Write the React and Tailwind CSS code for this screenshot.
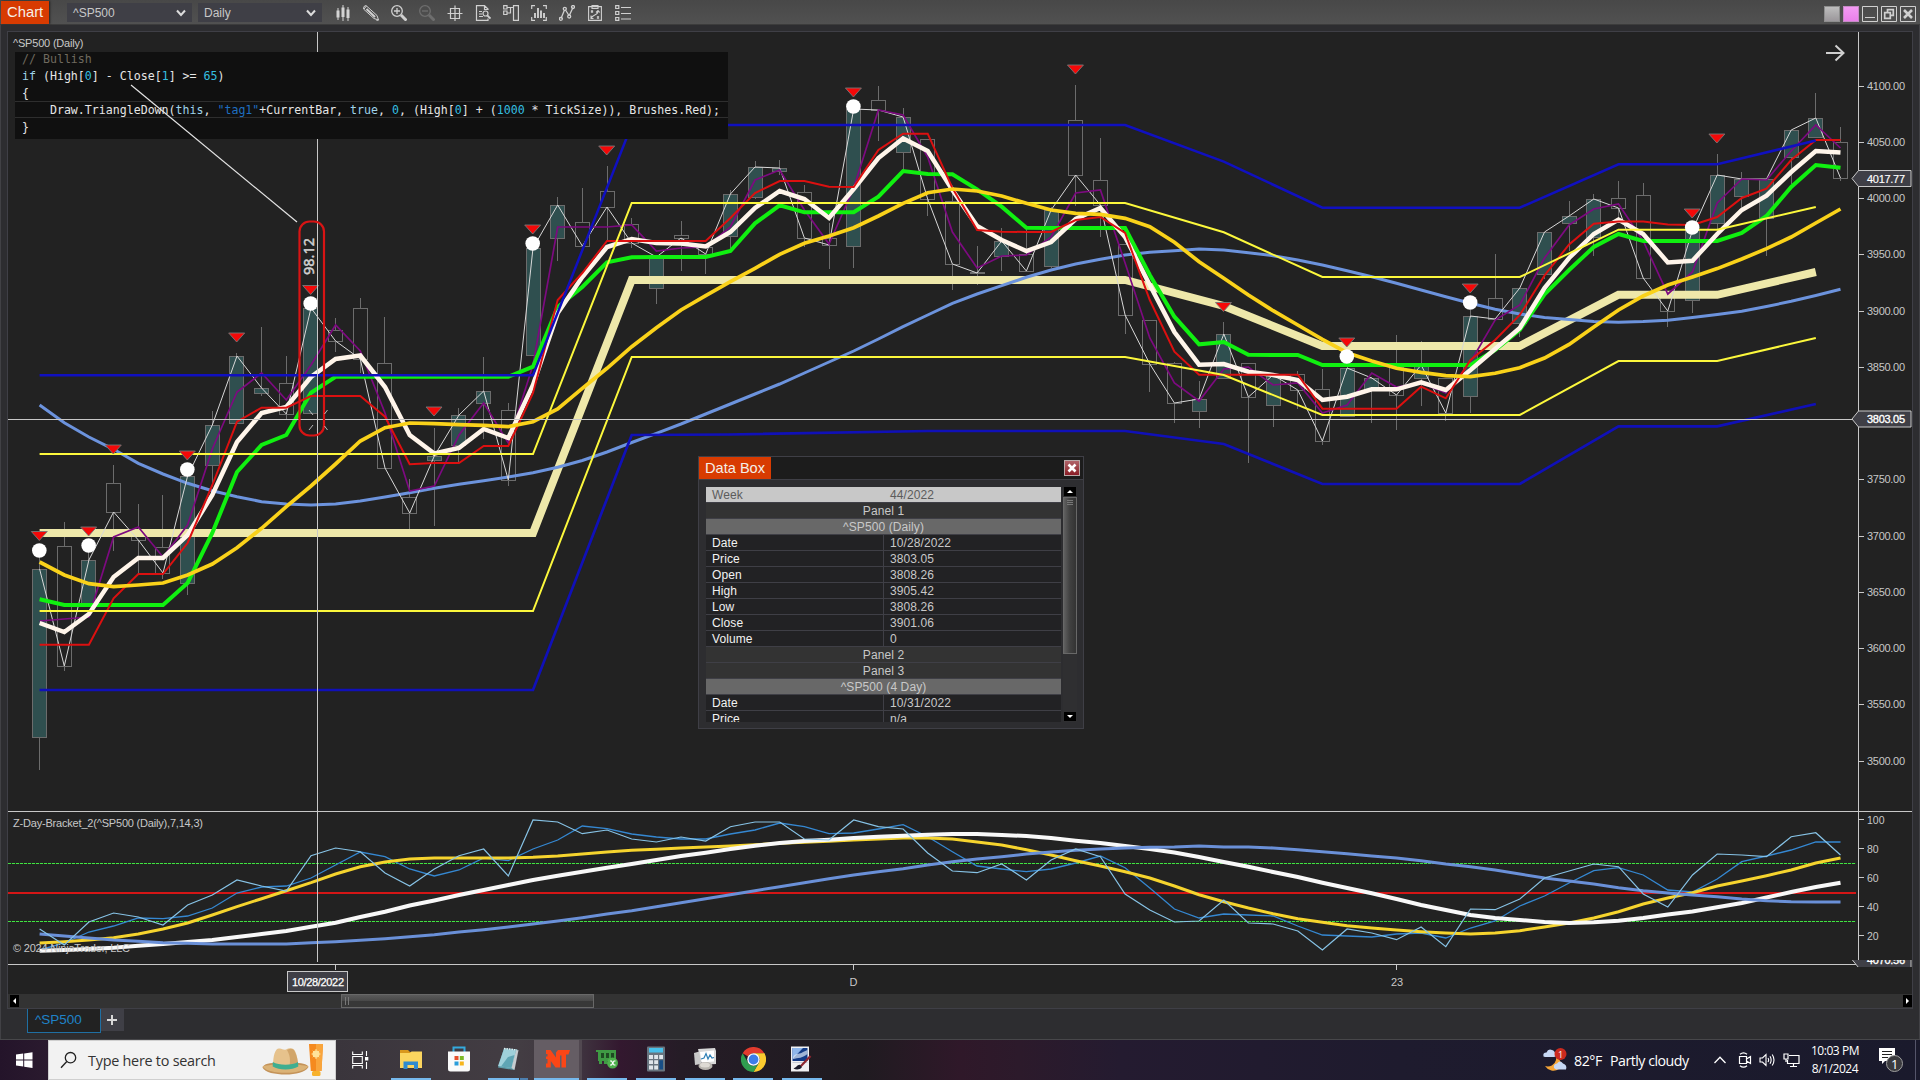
import React from "react";

const ARIAL = "font-['Liberation_Sans',Arial,sans-serif]";
const SEGOE = "font-['Open_Sans','Noto_Sans',sans-serif]";

const nums = (s) => s.trim().split(/\s+/).map(Number);
const barX = (i) => 39.6 + 24.67 * i;
const toPoints = (ys) => ys.map((y, i) => `${barX(i).toFixed(1)},${y}`).join(" ");
const sparse = (pairs) => pairs.map(([i, y]) => `${barX(i).toFixed(1)},${y}`).join(" ");

// high, low, body top, body bottom, rising (1) or falling (0)
const CANDLES = [
  [556, 770, 569, 737, 1], [522, 671, 546, 666, 0], [545, 605, 560, 605, 1], [465, 551, 483, 512, 0],
  [504, 574, 530, 540, 0], [495, 579, 547, 573, 0], [475, 595, 476, 583, 1], [411, 487, 425, 465, 1],
  [353, 424, 356, 423, 1], [327, 396, 388, 393, 1], [356, 419, 383, 414, 0], [303, 414, 308, 413, 1],
  [318, 352, 330, 341, 0], [298, 373, 308, 359, 0], [317, 469, 363, 468, 0], [479, 537, 497, 513, 0],
  [428, 526, 456, 460, 1], [408, 463, 415, 445, 1], [357, 439, 391, 403, 1], [403, 486, 410, 480, 0],
  [245, 356, 248, 355, 1], [197, 261, 205, 238, 1], [188, 247, 222, 246, 0], [166, 240, 191, 207, 0],
  [218, 248, 224, 243, 0], [256, 304, 257, 288, 1], [221, 271, 235, 238, 0], [245, 274, 247, 254, 0],
  [190, 253, 194, 236, 1], [161, 199, 167, 197, 1], [160, 175, 168, 171, 1], [185, 247, 192, 238, 0],
  [223, 269, 238, 245, 0], [105, 268, 109, 246, 1], [86, 141, 100, 110, 0], [108, 170, 117, 152, 1],
  [139, 216, 139, 199, 0], [190, 290, 201, 264, 0], [246, 285, 272, 273, 0], [228, 271, 241, 256, 1],
  [229, 272, 254, 271, 0], [207, 268, 210, 266, 1], [85, 206, 120, 175, 0], [138, 237, 180, 205, 0],
  [244, 334, 244, 315, 0], [320, 392, 320, 364, 0], [362, 423, 363, 403, 0], [381, 428, 399, 411, 1],
  [322, 378, 334, 378, 1], [363, 463, 363, 397, 0], [374, 427, 375, 405, 1], [371, 409, 374, 390, 0],
  [369, 445, 389, 441, 0], [366, 416, 368, 416, 1], [377, 423, 378, 390, 1], [335, 430, 367, 395, 0],
  [341, 406, 365, 378, 1], [378, 421, 378, 413, 0], [310, 413, 316, 396, 1], [254, 319, 298, 319, 0],
  [288, 337, 288, 323, 1], [232, 279, 232, 274, 1], [201, 251, 216, 223, 1], [194, 256, 199, 237, 1],
  [181, 220, 198, 208, 0], [183, 278, 195, 278, 0], [292, 327, 293, 311, 0], [229, 313, 230, 300, 1],
  [154, 231, 175, 223, 1], [172, 208, 179, 196, 1], [179, 256, 179, 218, 1], [130, 184, 130, 157, 1],
  [93, 138, 118, 137, 1], [127, 181, 142, 178, 0],
];

const CLOSES = CANDLES.map(([, , top, bottom, up]) => (up ? top : bottom));

const PURPLE = nums(`621 619 617 537 527 557 525 449 392 373 400 365 325 351 413 491 486 435 403 443 365 227 227 227 225 251 248 247 227 180
 170 210 244 188 110 115 157 232 268 256 255 237 193 190 263 338 383 401 369 367 385 383 413 405 373 387 383 393 362 320 305 258 225 209 204
 241 294 272 203 179 180 151 125 148`);
const CREAM = nums(`623 632 614 577 558 558 535 495 442 413 407 377 359 355.5 387 435 453.5 448 429 438 385 313 277 247 239 243 243.5 246.5 232 208
 191 199 218 189 158 138.5 151 190 226 240 251 242 219 208 237 285 332 364.7 364 371.7 375 380 400 396.7 389.3 389.3 382.3 390 370 349 328 288
 258 234 219.5 234 262.4 260.7 234 210 195.6 172 151 152.5`);
const GREEN = nums(`599.3 605 605 605 605 605 583 533 472 445 435 392.7 376.7 376.7 376.7 376.7 376.7 376.7 376.7 376.7 366.7 307 287 262.3 257.3
 257 257 257 251 223.3 205.3 212.3 212.3 212.3 196.7 171 174 174.3 189.3 206.7 227.7 228 228 228 228 275 316.7 344.3 342 354.7 355 355 365 365
 365 365 365 365 365 350 330 294.4 270 247 234 241 241 241 241 233 216 187 165 167.7`);
const RED = nums(`644.7 644.7 644.7 598.3 574 574 543 485 421.7 407.7 407.7 396 396 396 416.7 464.3 463 463 446 446 393 300 273 241 241 241 241
 241 218 193 181 181 186.7 187 150 133.7 133.7 188 230 231.7 232 232 220 217 233 300 351.7 374.7 374.7 374.7 374.7 374.7 408.7 408.7 408.7 408.7
 386.7 398.3 360 340 315 275.5 244.5 223.8 221.4 221.4 224.5 225 217 198 188.7 160 140 140`);
const GOLD = nums(`562 575 583.7 586.7 585 583 575 564 547.7 528.3 506.7 486 464 441 427.7 423 423.7 424.7 425.3 426.7 421.7 409 388.3 368.3
 346.7 327.7 310 295.7 281.7 268.3 254.3 243.3 236 227.7 216 203.3 192.7 189 191 196 203.3 210 213.3 214.3 218.3 226.7 242.3 261.7 278.3 295 310.7
 325 339.3 352.7 361 368.3 372.3 375.7 376.7 373.3 367.7 358 344.4 327 310 296 285 277 268.6 259 248.6 237 223 209`);
const CORNFLOWER = nums(`405 422.7 437 449.3 463.3 474 483.3 490.7 496.7 501.7 504 505 504 501 497 492.7 488.3 484.3 480.7 477 472.7 467.3 460.5
 452 442.5 433.3 424 414 404 394 384 373 362 351 339 326.7 315 303.3 294 285.7 277.3 270 264 259.3 255 252.3 250.7 249 250 252.7 255.7 260 265
 270.7 276.7 283.3 290 296.7 303.3 309.3 314 317.5 319.6 321.6 322.3 321.6 320.2 317.5 314.4 311.3 306.5 301.3 295.5 289.3`);

const KHAKI = sparse([[0, 533], [20, 533], [24, 280], [44, 280], [48, 306], [52, 346], [60, 346], [64, 294.8], [68, 294.8], [72, 272]]);
const BLUE_TOP = sparse([[0, 375.3], [20, 375.3], [24, 125], [44, 125], [48, 161.7], [52, 207.7], [60, 207.7], [64, 164.3], [68, 164.3], [72, 140.5]]);
const BLUE_LOW = sparse([[0, 690], [20, 690], [24, 435], [28, 434.5], [36, 431], [44, 431], [48, 444], [52, 484], [60, 484], [64, 426.3], [68, 426.3], [72, 404]]);
const YELLOW_TOP = sparse([[0, 454], [20, 454], [24, 203], [44, 203], [48, 232.3], [52, 277], [60, 277], [64, 229.7], [68, 229.7], [72, 207]]);
const YELLOW_LOW = sparse([[0, 611], [20, 611], [24, 357], [44, 357], [48, 375], [52, 415], [60, 415], [64, 361], [68, 361], [72, 338]]);

const OSC_RAW = nums(`929 945 922 913 917 925 905 895 880 886 891 855.7 848 851.7 873 886 869 855.7 849 876 820 822 833.7 830 839 842 837 841
 826.7 822 822 839 840 820 826.7 829 853 871 872.7 864 880 860 849 856.7 894 910 922 921 900 923 924 931 950 929 933 939.7 927 946.7 909 909.7 899
 878 871 864 866.7 894 907 875 854 855 856.7 836.7 832.7 855`);
const OSC_AVG = nums(`950 943 932 926 918 918.7 916 908 893 887 886 878 865 852 856.7 869 876 870 858 860.7 849 840 826 828.7 834 837 839 839 834
 830 823 826.7 833.7 833 829 824.7 836.7 851.7 866 869 871.7 869 863 856 867.7 888 909 918 914 915 916 926 935 936 937 934 933 938 928 921 906 896
 883 870.7 867.7 875 890 892 879 861.7 856 850 842 842`);
const OSC_YELLOW = nums(`943 941.7 940 937.7 934 929 923 915 906.7 898.7 890.7 882.7 874 866.7 862 859 858 858 858 858 857.3 856 854 852 850.3
 849.3 848 847 846 844.7 843.3 842.3 841.3 840 839 838 838 839 842 845 849.7 855 860.7 866 871.7 878 886 894.7 901.7 908 913.7 918.7 922.3 925.7
 928 930 931.7 933 934 933 930.7 927 923 918 911.7 904 898 892.7 886 881 875.7 870 863 858`);
const OSC_WHITE = nums(`950.7 950 949 947.7 945.7 944 942 940 937 934 931 926.7 922.7 917 911.7 905.5 900.5 895 890 885 880 875.7 871.7 867.7 864
 860 856 852.7 849 845.7 843 841 839.7 838 836.7 835.7 834.7 834 834 835 836 838 840.7 843 846 849 852.5 857 862 866.7 872 877 882.7 888 893.3 899
 905 910 915 918 920 922 923 922.3 920.7 918 914.5 911.5 907.3 903 897.5 892 887 882.7`);
const OSC_BLUE = nums(`934 936 938 940 941.3 942.7 943.3 944 944 944 944 942.7 941.7 940.3 938.7 936.7 934.7 932 929.7 927 924 921 917.7 914 910.7
 906.7 902.7 898.7 894.7 890.7 886.7 882.7 878.7 875 871.7 868.7 865 861.7 859 856.7 854 852 850.3 849 848 847.3 847 846 847 847 848 849.7 851.7
 853.7 856 858 860.7 864 866.7 870 874 878 881 884 887.7 890.7 893 895 896.7 899 900.7 901.7 902 902`);

const TRIANGLES = [[0, 536], [2, 531.5], [3, 449.5], [6, 455.5], [8, 337.5], [11, 290], [16, 411.5], [20, 229.5], [23, 150.5], [33, 92.5], [42, 69.5], [48, 307], [53, 342.5], [58, 288.5], [67, 213.5], [68, 138.5]];
const BALLS = [[0, 550.5], [2, 545.5], [6, 469.5], [11, 303.5], [20, 243.5], [33, 106.5], [53, 356.5], [58, 302.5], [67, 227.5]];

const PRICE_TICKS = [4100, 4050, 4000, 3950, 3900, 3850, 3750, 3700, 3650, 3600, 3550, 3500];
const OSC_TICKS = [[100, 819.5], [80, 848.5], [60, 877.5], [40, 906.5], [20, 935.5]];

function Line({ pts, color, width }) {
  return <polyline points={pts} fill="none" stroke={color} strokeWidth={width} strokeLinejoin="miter" />;
}

function PriceTag({ y, label, bold }) {
  return (
    <g>
      <path d={`M1852 ${y}L1858.500 ${y - 8}H1911V${y + 8}H1858.500Z`} fill="#3f3f46" stroke="#c8c8c8" />
      <text x="1867" y={y + 4} fontSize="11" fill="#fff" stroke="#fff" strokeWidth={bold ? "0.350" : "0.150"} textLength="38">{label}</text>
    </g>
  );
}

function Chart() {
  return (
    <svg viewBox="0 25 1920 969" className={`block h-[969px] w-[1920px] ${ARIAL}`}>
      <rect x="0" y="25" width="1920" height="969" fill="#2d2d30" />
      <rect x="7.500" y="31.500" width="1905" height="970" fill="#222222" stroke="#3f3f46" />
      <path d="M0.500 25V994M1919.500 25V994" stroke="#414145" />

      {CANDLES.map(([hi, lo, top, bottom, up], i) => {
        const x = Math.floor(barX(i)) + 0.5;
        return (
          <g key={i} stroke="#6c6c6c" strokeWidth="1">
            <path d={`M${x} ${hi}V${top}M${x} ${bottom}V${lo}`} />
            <rect x={x - 7} y={top + 0.5} width="14" height={Math.max(bottom - top, 1)} fill={up ? "#2f4f4f" : "none"} />
          </g>
        );
      })}

      <Line pts={KHAKI} color="#eee8aa" width="8" />
      <Line pts={toPoints(CORNFLOWER)} color="#6c93dd" width="3" />
      <Line pts={toPoints(CLOSES)} color="#d8d8d8" width="1" />
      <Line pts={toPoints(PURPLE)} color="#7d0a80" width="1.700" />
      <Line pts={toPoints(GREEN)} color="#10f010" width="4" />
      <Line pts={toPoints(CREAM)} color="#fff5ea" width="4.500" />
      <Line pts={toPoints(RED)} color="#dc1010" width="2" />
      <Line pts={BLUE_TOP} color="#1010c0" width="2.500" />
      <Line pts={BLUE_LOW} color="#1010b8" width="2.700" />
      <Line pts={YELLOW_TOP} color="#fcf83c" width="2" />
      <Line pts={YELLOW_LOW} color="#fcf83c" width="2" />
      <Line pts={toPoints(GOLD)} color="#fad21a" width="3.700" />

      <path d="M8 863.500H1856M8 921.500H1856" stroke="#0f4a0f" strokeWidth="1" />
      <path d="M8 863.500H1856M8 921.500H1856" stroke="#44e044" strokeWidth="1" strokeDasharray="3 1" />
      <path d="M8 893H1856" stroke="#d41616" strokeWidth="2" />
      <Line pts={toPoints(OSC_AVG)} color="#3588d2" width="1.300" />
      <Line pts={toPoints(OSC_YELLOW)} color="#f6d42e" width="3" />
      <Line pts={toPoints(OSC_WHITE)} color="#f8f8f8" width="4" />
      <Line pts={toPoints(OSC_BLUE)} color="#6a90d8" width="3" />
      <Line pts={toPoints(OSC_RAW)} color="#87c3e6" width="1.200" />

      {TRIANGLES.map(([i, y]) => {
        const x = barX(i) - 0.3;
        return <path key={`t${i}`} d={`M${x - 8} ${y - 4.5}H${x + 8}L${x} ${y + 4.5}Z`} fill="#f40808" stroke="#777" strokeWidth="0.900" />;
      })}
      {BALLS.map(([i, y]) => (
        <circle key={`b${i}`} cx={barX(i) - 0.3} cy={y} r="7.300" fill="#fff" />
      ))}

      <path d="M317.500 32V962M8 419.500H1853" stroke="#c8c8c8" />
      <path d="M8 811.500H1912M8 964.500H1856" stroke="#c8c8c8" />
      <path d="M1858.500 32V960" stroke="#c8c8c8" />
      <path d="M335.500 965V970M853.500 965V970M1396.500 965V970" stroke="#c8c8c8" />

      <g fill="#c8c8c8" fontSize="11">
        {PRICE_TICKS.map((p) => {
          const y = Math.round(85.7 + (4100 - p) * 1.1248);
          return (
            <g key={p}>
              <path d={`M1859 ${y + 0.5}H1864`} stroke="#c8c8c8" />
              <text x="1867" y={y + 4} textLength="38">{p.toFixed(2)}</text>
            </g>
          );
        })}
        {OSC_TICKS.map(([v, y]) => (
          <g key={v}>
            <path d={`M1859 ${y}H1864`} stroke="#c8c8c8" />
            <text x="1867" y={y + 4.5} fontSize="10.500">{v}</text>
          </g>
        ))}
        <text x="849.500" y="986">D</text>
        <text x="1391" y="986">23</text>
        <text x="13" y="47" textLength="70.500">^SP500 (Daily)</text>
        <text x="13" y="827" textLength="190">Z-Day-Bracket_2(^SP500 (Daily),7,14,3)</text>
        <text x="13" y="952" textLength="117">© 2024 NinjaTrader, LLC</text>
      </g>

      <PriceTag y={178.5} label="4017.77" />
      <PriceTag y={419} label="3803.05" bold />
      <clipPath id="axis-edge"><rect x="1850" y="960" width="65" height="7" /></clipPath>
      <g clipPath="url(#axis-edge)"><PriceTag y={959.5} label="4070.56" bold /></g>

      <rect x="287.500" y="971.500" width="60" height="20" fill="#3f3f46" stroke="#c8c8c8" />
      <text x="292" y="985.500" fontSize="11" fill="#fff" stroke="#fff" strokeWidth="0.250" textLength="52">10/28/2022</text>

      <path d="M1826 53H1843M1835.500 45.500L1843.500 53L1835.500 60.500" fill="none" stroke="#d0d0d0" strokeWidth="2" />
    </svg>
  );
}

function CodeBox() {
  return (
    <div className="absolute left-[15px] top-[52px] h-[87px] w-[713px] whitespace-pre bg-[#101010] font-['DejaVu_Sans_Mono',monospace] text-[11.600px] leading-[17px] text-[#e6e6e6]">
      <div className="pl-[7px] text-[#6f6a5f] leading-[15px]">// Bullish</div>
      <div className="pl-[7px] pt-px"><span className="text-[#9fd3ea]">if</span> (High[<span className="text-[#35bfe0]">0</span>] - Close[<span className="text-[#35bfe0]">1</span>] &gt;= <span className="text-[#35bfe0]">65</span>)</div>
      <div className="h-[16px] pl-[7px]">{"{"}</div>
      <div className="h-[17px] border-y border-[#2e2e2e] pl-[7px] leading-[17px]">
        {"    Draw.TriangleDown("}<span className="text-[#9fd3ea]">this</span>, <span className="text-[#1f6fc0]">"tag1"</span>+CurrentBar, <span className="text-[#9fd3ea]">true</span>, <span className="text-[#35bfe0]">0</span>, (High[<span className="text-[#35bfe0]">0</span>] + (<span className="text-[#35bfe0]">1000</span> * TickSize)), Brushes.Red);
      </div>
      <div className="pl-[7px] pt-px">{"}"}</div>
    </div>
  );
}

// Hand-drawn callout that ties the code condition to one bar
function Annotation() {
  return (
    <svg viewBox="0 0 360 450" className="pointer-events-none absolute left-0 top-0 h-[450px] w-[360px] font-['Noto_Sans',sans-serif]">
      <path d="M131 85L297 222" stroke="#e4e4e4" strokeWidth="1.200" />
      <rect x="299.500" y="221.500" width="24.500" height="214" rx="10" fill="none" stroke="#d81414" strokeWidth="2.200" />
      <text transform="translate(314 275) rotate(-90)" fontSize="14.500" fill="#cfcfcf" stroke="#cfcfcf" strokeWidth="0.500" textLength="37">98.12</text>
      <path d="M309 410L313 415M327.500 410L324.500 414M313 425L309 430M324.500 426L327.500 430" stroke="#ddd" strokeWidth="0.800" />
    </svg>
  );
}

const ROWS = [
  ["panel", "Panel 1"], ["series", "^SP500 (Daily)"], ["row", "Date", "10/28/2022"], ["row", "Price", "3803.05"],
  ["row", "Open", "3808.26"], ["row", "High", "3905.42"], ["row", "Low", "3808.26"], ["row", "Close", "3901.06"],
  ["row", "Volume", "0"], ["panel", "Panel 2"], ["panel", "Panel 3"], ["series", "^SP500 (4 Day)"],
  ["row", "Date", "10/31/2022"], ["row", "Price", "n/a"],
];

function DataBox() {
  return (
    <div className={`absolute left-[698px] top-[456px] flex h-[273px] w-[386px] flex-col border border-[#3f3f46] bg-[#2d2d30] ${ARIAL}`}>
      <div className="flex h-[23px] items-center justify-between border-b border-[#3f3f46] bg-[#1c1c1c] pr-[3px]">
        <div className="h-full w-[72px] bg-[#d83b01] pl-[6px] text-[14.600px] leading-[22px] text-[#f4efe8]">Data Box</div>
        <div className="flex size-4 items-center justify-center border border-[#b9a9a9] bg-gradient-to-b from-[#b0646a] to-[#8a1a26]">
          <svg viewBox="0 0 10 10" className="size-[10px]"><path d="M1.500 1.500L8.500 8.500M8.500 1.500L1.500 8.500" stroke="#fff" strokeWidth="2.600" /></svg>
        </div>
      </div>
      <div className="ml-[7px] mt-[7px] flex h-[235px]">
        <div className="h-full w-[355px] overflow-hidden text-[12px] leading-[17px] tracking-[0.100px]">
          <div className="flex h-[16px] border-b border-[#3f3f46] bg-[#c8c8c8] text-[#5c5c5c]">
            <div className="w-[178px] pl-[6px]">Week</div>
            <div className="pl-[6px]">44/2022</div>
          </div>
          {ROWS.map(([kind, a, b], i) =>
            kind === "row" ? (
              <div key={i} className="flex h-[16px] border-b border-[#3f3f46] bg-[#222224]">
                <div className="w-[178px] border-r border-[#3f3f46] pl-[6px] text-[#f2f2f2]">{a}</div>
                <div className="pl-[6px] text-[#c8c8c8]">{b}</div>
              </div>
            ) : (
              <div key={i} className={kind === "panel" ? "h-[16px] border-b border-[#3f3f46] bg-[#333333] text-center text-[#c8c8c8]" : "h-[16px] border-b border-[#3f3f46] bg-[#686868] text-center text-[#c8c8c8]"}>{a}</div>
            )
          )}
        </div>
        <div className="ml-[2px] flex h-full w-[14px] flex-col bg-[#2f2f31]">
          <div className="flex h-[9px] w-[12px] items-center justify-center self-center bg-black"><svg viewBox="0 0 8 4" className="h-[3px] w-[6px]"><path d="M0 4L4 0L8 4Z" fill="#fff" /></svg></div>
          <div className="mt-px flex h-[157px] w-[14px] flex-col gap-px border border-[#686868] bg-gradient-to-r from-[#606060] via-[#404040] to-[#333] px-[3px] pt-[2px]">
            <div className="h-px bg-[#777]" /><div className="h-px bg-[#777]" /><div className="h-px bg-[#777]" />
          </div>
          <div className="grow" />
          <div className="mb-px flex h-[9px] w-[12px] items-center justify-center self-center bg-black"><svg viewBox="0 0 8 4" className="h-[3px] w-[6px]"><path d="M0 0L4 4L8 0Z" fill="#fff" /></svg></div>
        </div>
      </div>
    </div>
  );
}

const TOOLS = [
  // candles
  <g key="a" fill="#d4d4d4" stroke="#d4d4d4"><path d="M3 3V15M8 0V16M13 2V16" strokeWidth="1" /><path d="M1.500 5.500H4.500V12.500H1.500ZM6.500 2.500H9.500V12H6.500ZM11.500 4.500H14.500V13H11.500Z" stroke="none" /></g>,
  // pencil
  <g key="b" fill="none" stroke="#d0d0d0"><path d="M1 1.500L3 0.500L14 10.500L15.500 15L11 13.500L0.500 4Z" /><path d="M3.500 4L12 12" strokeWidth="2" /><path d="M3.500 1L1 4M13.500 15.500L15.500 15" /></g>,
  // zoom in
  <g key="c" fill="none" stroke="#d0d0d0"><circle cx="6" cy="6" r="5.300" strokeWidth="1.300" /><path d="M3 6H9M6 3V9" strokeWidth="1.300" /><path d="M10 10L15.500 15.500" strokeWidth="3" /></g>,
  // zoom out
  <g key="d" fill="none" stroke="#6e6e6e"><circle cx="6" cy="6" r="5.300" strokeWidth="1.300" /><path d="M3 6H9" strokeWidth="1.300" /><path d="M10 10L15.500 15.500" strokeWidth="3" /></g>,
  // crosshair
  <g key="e" fill="none" stroke="#d0d0d0"><path d="M3.500 3.500H12.500V13.500H3.500ZM8 0.500V16M0.500 8.500H15.500" strokeWidth="1.200" /></g>,
  // document search
  <g key="f" fill="none" stroke="#d0d0d0" strokeWidth="1.200"><path d="M13 5V4L9.500 0.700H1.500V15.300H13V13.500M9.500 1V4.500H12.500M4 6.500H7M4 9H7M4 11.500H8" /><circle cx="10.500" cy="8.500" r="2.500" /><path d="M12.300 10.500L15.500 13.500" strokeWidth="1.800" /></g>,
  // panel trader
  <g key="g" fill="none" stroke="#d0d0d0" strokeWidth="1.200"><path d="M10.500 0.700H15.400V15.300H10.500ZM0.700 0.700H4V4H0.700ZM0.700 6H4V9.500H0.700ZM4 2.500H10.500M4 8H7.500V2.500" /></g>,
  // data series
  <g key="h" fill="none" stroke="#d0d0d0" strokeWidth="1.200"><path d="M4 0.700H0.700V4M12 0.700H15.300V4M0.700 12V15.300H4M15.300 12V15.300H12" /><path d="M4 13V8M7 13V3M10 13V5.500M13 13V8" strokeWidth="1.900" /></g>,
  // indicators
  <g key="i" fill="none" stroke="#d0d0d0" strokeWidth="1.300"><path d="M2 13.500L5.500 5M6.500 5L10 10.500M10.500 10L14 2.500" /><circle cx="1.900" cy="13.800" r="1.500" /><circle cx="5.800" cy="3.800" r="1.500" /><circle cx="10.200" cy="11.500" r="1.500" /><circle cx="14" cy="2" r="1.500" /></g>,
  // strategies
  <g key="j" fill="none" stroke="#d0d0d0" strokeWidth="1.100"><path d="M1.600 1.600H14.400V15.400H1.600ZM5 3.500H11V0.600H5ZM4 5.500L6 7.500M6 5.500L4 7.500M10 11.500L12 13.500M12 11.500L10 13.500M4.500 13C4.500 10 11 10.500 11 6.500M9 7.500L11 5.500L12.800 7.500M4 10.500V13.500H6.500" /></g>,
  // properties
  <g key="k" fill="none" stroke="#d0d0d0" strokeWidth="1.200"><path d="M0.700 0.700H3.800V3.500H0.700ZM0.700 6.500H3.800V9.500H0.700ZM0.700 12.500H3.800V15.300H0.700ZM6 2.500H16M6 8.500H16M6 14H16" /></g>,
];

function Combo({ label, className }) {
  return (
    <div className={`flex h-[19px] items-center justify-between bg-[#3f3f46] pl-[6px] pr-[6px] text-[12px] text-[#c8c8c8] ${className}`}>
      <span>{label}</span>
      <svg viewBox="0 0 10 8" className="h-[8px] w-[10px]"><path d="M1 1.500L5 6L9 1.500" fill="none" stroke="#dcdcdc" strokeWidth="2" /></svg>
    </div>
  );
}

function TitleBar() {
  return (
    <div className={`flex h-[25px] items-center border-b border-[#3c3c3c] bg-gradient-to-b from-[#484848] to-[#515151] pl-px pr-[4px] pt-px ${ARIAL}`}>
      <div className="h-[23px] w-[48px] bg-[#d83b01] pl-[6px] text-[14.800px] leading-[23px] text-[#f6f0e8] shadow-[1px_0_2px_#222]">Chart</div>
      <Combo label="^SP500" className="ml-[18px] w-[125px]" />
      <Combo label="Daily" className="ml-[6px] w-[124px]" />
      <div className="ml-[13px] mt-px flex gap-[12px]">
        {TOOLS.map((t, i) => (
          <svg key={i} viewBox="0 0 16 16" className="size-4">{t}</svg>
        ))}
      </div>
      <div className="grow" />
      <div className="mt-[2px] flex gap-[3px]">
        <div className="size-4 border border-[#8e8e8e] bg-gradient-to-b from-[#bdbdbd] to-[#9b979b]" />
        <div className="size-4 border border-[#c58ac5] bg-gradient-to-b from-[#f39af3] to-[#ea80ea]" />
        <svg viewBox="0 0 16 16" className="size-4"><path d="M0.500 0.500H15.500V15.500H0.500ZM3 11.500H13" fill="none" stroke="#d0d0d0" /></svg>
        <svg viewBox="0 0 16 16" className="size-4"><path d="M0.500 0.500H15.500V15.500H0.500Z" fill="none" stroke="#d0d0d0" /><path d="M6.500 6.500V3.700H12.300V9.300H9.500M3.700 6.700H9.300V12.300H3.700Z" fill="none" stroke="#d0d0d0" strokeWidth="1.700" /></svg>
        <svg viewBox="0 0 16 16" className="size-4"><path d="M0.500 0.500H15.500V15.500H0.500Z" fill="none" stroke="#d0d0d0" /><path d="M4 4L12 12M12 4L4 12" stroke="#d0d0d0" strokeWidth="2.600" /></svg>
      </div>
    </div>
  );
}

function BottomBars() {
  return (
    <div className="h-[45px] border-x border-[#414145] bg-[#2d2d30]">
      <div className="mx-[6px] flex h-[15px] items-center border-x border-b border-[#3f3f46] bg-[#333333]">
        <div className="ml-[2px] flex h-[12px] w-[9px] items-center justify-center bg-black"><svg viewBox="0 0 4 8" className="h-[6px] w-[3px]"><path d="M4 0L0 4L4 8Z" fill="#fff" /></svg></div>
        <div className="ml-[322px] flex h-[14px] w-[253px] items-center gap-[2px] border border-[#686868] bg-[linear-gradient(180deg,#5a5a5a,#484848_50%,#383838_51%)] pl-[3px]">
          <div className="h-[8px] w-px bg-[#777]" /><div className="h-[8px] w-px bg-[#777]" />
        </div>
        <div className="grow" />
        <div className="flex h-[12px] w-[9px] items-center justify-center bg-black"><svg viewBox="0 0 4 8" className="h-[6px] w-[3px]"><path d="M0 0L4 4L0 8Z" fill="#fff" /></svg></div>
      </div>
      <div className={`ml-[26px] flex ${ARIAL}`}>
        <div className="h-[24px] w-[74px] border-x border-b border-[#1f6fa3] bg-[#222] pl-[7px] text-[13.500px] leading-[21px] text-[#1f82c8]">^SP500</div>
        <div className="flex h-[22px] w-[23px] items-center justify-center bg-[#3f3f46] pr-[2px]">
          <svg viewBox="0 0 10 10" className="size-[10px]"><path d="M5 0V10M0 5H10" stroke="#d8d8d8" strokeWidth="2" /></svg>
        </div>
      </div>
    </div>
  );
}

function AppButton({ children, className = "", bar = true }) {
  return (
    <div className={`flex h-full w-[40px] flex-col ${className}`}>
      <div className="flex grow items-center justify-center">{children}</div>
      <div className={bar ? "h-[2px] bg-[#76b9ed]" : "h-[2px]"} />
    </div>
  );
}

function Taskbar() {
  return (
    <div className={`flex h-[41px] items-stretch border-t border-[#47474a] bg-[linear-gradient(90deg,#24142a_0px,#2a1a2e_48px,#3a353c_336px,#433d43_520px,#3f343f_580px,#33182f_620px,#251c26_680px,#1f1b20_860px,#2f1829_960px,#2c1a2b_1020px,#241b30_1120px,#1e1b2e_1400px,#1a1a2c_1919px)] ${SEGOE}`}>
      <div className="flex w-[48px] items-center pl-[15px]">
        <svg viewBox="0 0 18 18" className="size-[18px]"><path d="M1 3.600L8.200 2.600V8.500H1ZM9.200 2.400L17.500 1.200V8.500H9.200ZM1 9.500H8.200V15.500L1 14.600ZM9.200 9.500H17.500V16.900L9.200 15.700Z" fill="#fff" /></svg>
      </div>
      <div className="flex w-[288px] items-center border border-[#cfcfcf] bg-[#f2f2f2]">
        <svg viewBox="0 0 18 18" className="ml-[11px] size-[18px]"><circle cx="10.500" cy="6.700" r="5.200" fill="none" stroke="#222" strokeWidth="1.300" /><path d="M6.800 10.500L1 16.700" stroke="#222" strokeWidth="1.400" /></svg>
        <div className="ml-[10px] w-[174px] whitespace-nowrap pt-px text-[14.400px] tracking-[-0.250px] text-[#333]">Type here to search</div>
        <svg viewBox="0 0 64 34" className="h-[34px] w-[64px]">
          <path d="M0.500 24.500C2 20 11 19.500 23.500 20C36 19.500 45 20 46.500 24C43 29.500 34 31.500 23.500 31.500S3 29.500 0.500 24.500Z" fill="#c4935a" />
          <path d="M0.500 23.500C8 20.500 38 20.500 46.500 23.500C42 28 34 29.800 23.500 29.800S4 28 0.500 23.500Z" fill="#dbb377" />
          <path d="M11 23C11 13 13 5.500 17 5.500C20 5 21 7.500 24 6.500C27 5 31 4.500 33 8C35 12 36 18 36 23C30 26.500 17 26.500 11 23Z" fill="#e6c28c" />
          <path d="M25 7C29 5 31.500 5.500 33 9C35 13 36 18 36 22C33 24 30 25 27 25C29 18 28 12 25 7Z" fill="#cc9d62" opacity="0.800" />
          <path d="M10.800 19C17 22.500 30 22.500 36 19L36.300 23.500C30 27.500 17 27.500 10.700 23.500Z" fill="#3fae90" />
          <path d="M47 1H61L59.500 28H48.800Z" fill="#f58a1f" /><path d="M54 1H61L59.500 28H54Z" fill="#f9a53c" />
          <rect x="50" y="28" width="8.500" height="5" rx="1.500" fill="#f7b22c" />
          <circle cx="54" cy="11" r="3.500" fill="#ffe39a" /><path d="M54 6V16M49.500 11H58.500M50.800 7.800L57.200 14.200M57.200 7.800L50.800 14.200" stroke="#ffe39a" />
        </svg>
      </div>
      <div className="flex w-[55px] items-center justify-start pl-[16px]">
        <svg viewBox="0 0 17 18" className="h-[18px] w-[17px]"><path d="M0.700 0.500V3.500H10.300V0.500M0.700 17.500V14.500H10.300V17.500M0.700 5.500H10.300V12.500H0.700ZM14.500 0V5M14.500 11V18" fill="none" stroke="#fff" strokeWidth="1.100" /><rect x="13" y="6" width="3.300" height="3.500" fill="#fff" /></svg>
      </div>
      <AppButton>
        <svg viewBox="0 0 24 22" className="h-[22px] w-[24px]"><path d="M1 2H9L11 4H22V8H1Z" fill="#d9981d" /><path d="M1 5H11L12.500 3.500H23V20H1Z" fill="#fbd55f" /><path d="M4.500 21V13.500H19V21H15V17H8.500V21Z" fill="#2f8bd0" /></svg>
      </AppButton>
      <AppButton bar={false} className="ml-[8px]">
        <svg viewBox="0 0 24 26" className="h-[26px] w-[24px]"><path d="M6.500 6V1.500H17.500V6" fill="none" stroke="#34a9dd" strokeWidth="2" /><path d="M1 5.500H23V23Q23 25.500 20.500 25.500H3.500Q1 25.500 1 23Z" fill="#fafafa" /><path d="M7.500 10H11.500V14H7.500Z" fill="#e6502c" /><path d="M12.800 10H16.800V14H12.800Z" fill="#7db927" /><path d="M7.500 15.500H11.500V19.500H7.500Z" fill="#2a9ddb" /><path d="M12.800 15.500H16.800V19.500H12.800Z" fill="#f6b51c" /></svg>
      </AppButton>
      <div className="ml-[9px] flex h-full w-[40px] flex-col">
        <div className="flex grow items-center justify-center">
          <svg viewBox="0 0 24 24" className="size-[24px]"><path d="M8 1L21.500 2.500L18 23L2 20.500Z" fill="#5e9daa" /><path d="M8 2L20 3.500L15.500 21L2 19Z" fill="#9fd0da" /><path d="M12 10L18.500 8L15.500 21L5 19.500Z" fill="#5fa5b4" /><path d="M20 3.500L22.500 3L18.500 23L15.500 21Z" fill="#c6ccd0" /><path d="M8 1.500L21 3" stroke="#e6eef0" strokeWidth="1.500" strokeDasharray="1.500 1" /></svg>
        </div>
        <div className="flex h-[2px] gap-px"><div className="w-[31px] bg-[#76b9ed]" /><div className="w-[8px] bg-[#4d7fae]" /></div>
      </div>
      <div className="ml-[6px] flex h-full w-[45px] flex-col bg-[#655d64]">
        <div className="flex grow items-center justify-center pl-[2px]">
          <svg viewBox="0 0 24 18" className="h-[18px] w-[24px]"><path d="M0 0H4.500L10 7.500V2.500L12 0H24L22.500 4.500H20V17.500H15.500V5.500H14V17.500H9.500L4.800 11V17.500H0V13.500H1.500V9H0V6.500H1.500V4H0Z" fill="#fa4616" /></svg>
        </div>
        <div className="h-[2px] bg-[#76b9ed]" />
      </div>
      <div className="w-[3px] bg-[#514850]" />
      <AppButton className="ml-[5px]">
        <svg viewBox="0 0 24 22" className="h-[22px] w-[24px]"><path d="M1 2H21V13H18V16H15V13H12V16H9V13H7V16H4V13H3V4H1Z" fill="#3f9a44" /><path d="M6 5H9V10H6ZM11 5H14V10H11ZM16 5H19V10H16Z" fill="#1f4a22" /><circle cx="17.500" cy="15" r="5.500" fill="#4db04c" /><path d="M15 13H16.500L19 17H20.500M15 17H16.500L19 13H20.500" stroke="#fff" fill="none" strokeWidth="1.200" /></svg>
      </AppButton>
      <AppButton className="ml-[9px]">
        <svg viewBox="0 0 20 26" className="mr-px h-[26px] w-[20px]"><rect x="1" y="0.500" width="18" height="25" rx="1" fill="#68747f" /><rect x="3" y="2" width="14" height="4.500" fill="#48bfea" /><path d="M3 9H7V13H3ZM8.200 9H12V13H8.200ZM13.200 9H17V13H13.200ZM3 14.200H7V18H3ZM8.200 14.200H12V18H8.200ZM3 19.500H7V23.500H3ZM8.200 19.500H12V23.500H8.200Z" fill="#dfe5ea" /><path d="M13.200 14.200H17V23.500H13.200Z" fill="#184e86" /></svg>
      </AppButton>
      <AppButton className="ml-[9px]">
        <svg viewBox="0 0 24 24" className="size-[24px]"><path d="M1 6L8 4V17L2 18Z" fill="#c9c9c9" /><path d="M5 2L22 1L23 4V17L9 18Z" fill="#d8d8d8" /><path d="M7 5L21 3.500V14.500L8.500 15.500Z" fill="#fff" /><path d="M8 12L11 11L13 6.500L15 12L17 8L19 11L21 10.500" fill="none" stroke="#2d7fb5" strokeWidth="1.200" /><ellipse cx="12.500" cy="19" rx="7" ry="4" fill="#b8b4ae" /><ellipse cx="12" cy="18" rx="5" ry="2.500" fill="#dedad4" /></svg>
      </AppButton>
      <AppButton className="ml-[8px]">
        <svg viewBox="0 0 24 24" className="size-[25px]"><path d="M1.600 6A12 12 0 0 1 22.400 6H12A6 6 0 0 0 6.800 9Z" fill="#e33b2e" /><path d="M22.400 6A12 12 0 0 1 12 24L17.200 15A6 6 0 0 0 17.200 9Z" fill="#fccb2f" /><path d="M12 6H22.400L23.200 8L17.200 9Z" fill="#fccb2f" /><path d="M1.600 6A12 12 0 0 0 12 24L17.200 15A6 6 0 0 1 6.800 15Z" fill="#2f9e4f" /><circle cx="12" cy="12" r="6" fill="#fff" /><circle cx="12" cy="12" r="4.700" fill="#3d7de8" /></svg>
      </AppButton>
      <AppButton className="ml-[9px]">
        <svg viewBox="0 0 22 26" className="ml-[-2px] h-[26px] w-[22px]"><rect x="1" y="0.500" width="18" height="25" fill="#f0f0f2" /><rect x="2.500" y="2" width="15" height="13" fill="#123a86" /><path d="M2.500 2H13L2.500 13Z" fill="#8fb6ea" /><path d="M3 11C6 6 10 9 13 6L17.500 4V8C13 12 8 12 3 13Z" fill="#dbe8f8" opacity="0.700" /><path d="M2.500 16H17.500V17H2.500Z" fill="#c9ccd4" /><path d="M6 21C9 17.500 11 18.500 12 21C10 24 6 24 3.500 22.500Z" fill="#191a2a" /><path d="M20.500 10L11 20" stroke="#8e2630" strokeWidth="2.200" /></svg>
      </AppButton>
      <div className="grow" />
      <div className="flex items-center text-white">
        <svg viewBox="0 0 26 24" className="h-[24px] w-[26px]"><path d="M14 12A8.500 8.500 0 0 1 3 18A10 10 0 0 0 17 21Q22 14 14 9Z" fill="#f6a638" /><path d="M1.500 8.500Q0.500 4.500 4.500 4.500Q6 0.500 10 2Q13 3 13 5.500Q16 8 12 9H3Z" fill="#c7d8f5" /><path d="M12 20Q11 16 15 15.500Q18 11.500 21 15.500Q25.500 17 24 21.500H14Z" fill="#c7d8f5" /><circle cx="18.500" cy="6" r="6" fill="#cb2a1f" /><text x="16" y="9.500" fontSize="9" fill="#fff">1</text></svg>
        <div className="ml-[6px] w-[36px] pt-px text-[14.200px] tracking-[-0.450px]">82°F</div>
        <div className="w-[104px] whitespace-nowrap pt-px text-[14.200px] tracking-[-0.500px]">Partly cloudy</div>
        <svg viewBox="0 0 12 8" className="h-[8px] w-[12px]"><path d="M0.500 7L6 1.200L11.500 7" fill="none" stroke="#fff" strokeWidth="1.300" /></svg>
        <svg viewBox="0 0 14 16" className="ml-[12px] h-[16px] w-[14px]"><path d="M1.500 4.500H8.500V11.500H1.500ZM8.500 7L12.500 4.500V11.500L8.500 9M2 2.300Q5.500 -0.500 9 2.300M2 13.700Q5.500 16.500 9 13.700" fill="none" stroke="#fff" strokeWidth="1.200" /></svg>
        <svg viewBox="0 0 17 14" className="ml-[7px] h-[14px] w-[17px]"><path d="M1 5H3.500L7 1.500V12.500L3.500 9H1ZM9 5Q10.300 7 9 9M11 3.300Q13.300 7 11 10.700M13.200 1.500Q16.800 7 13.200 12.500" fill="none" stroke="#fff" strokeWidth="1.100" /></svg>
        <svg viewBox="0 0 17 15" className="ml-[7px] h-[15px] w-[17px]"><path d="M6 2.500H16V10.500H4.500V7M10.500 10.500V13.500M7 13.500H14M1 1H5V6H1ZM3 6V9" fill="none" stroke="#fff" strokeWidth="1.200" /></svg>
        <div className="ml-[8px] w-[54px] text-center text-[12px] leading-[18px] tracking-[-0.450px]"><div className="whitespace-nowrap">10:03 PM</div><div>8/1/2024</div></div>
        <svg viewBox="0 0 28 28" className="ml-[16px] h-[28px] w-[28px]"><path d="M1 2H17V15H7L4 18V15H1Z" fill="#fff" /><path d="M4 5.500H14M4 8.500H14M4 11.500H10" stroke="#222" /><circle cx="16.500" cy="17.500" r="8" fill="#3a3a3e" stroke="#a0a0a0" /><text x="13" y="22.500" fontSize="13" fill="#fff">1</text></svg>
        <div className="ml-[9px] h-[40px] w-px bg-[#55556a]" />
        <div className="w-[4px]" />
      </div>
    </div>
  );
}

export default function App() {
  return (
    <div className="relative flex h-[1080px] w-[1920px] flex-col overflow-hidden bg-[#222222]">
      <TitleBar />
      <Chart />
      <BottomBars />
      <Taskbar />
      <CodeBox />
      <Annotation />
      <DataBox />
    </div>
  );
}
